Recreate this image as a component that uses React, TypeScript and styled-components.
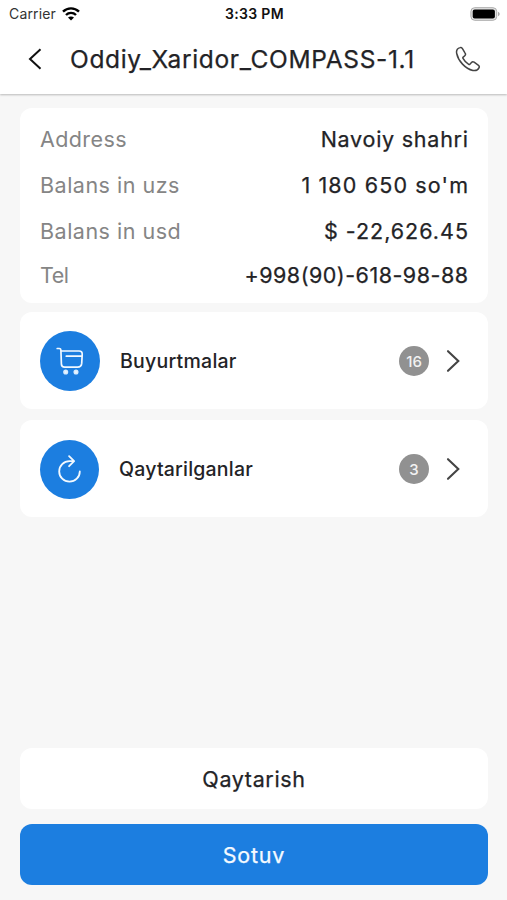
import React from 'react';
import styled, { createGlobalStyle } from 'styled-components';

const GlobalStyle = createGlobalStyle`
  * { box-sizing: border-box; }
  body { margin: 0; background: #f7f7f7; }
  button { font: inherit; border: 0; margin: 0; padding: 0; background: none; }
`;

const Screen = styled.div`
  display: flex;
  flex-direction: column;
  height: 900px;
  width: 507px;
  background: #f7f7f7;
  color: #232326;
  font-family: Inter, "Liberation Sans", sans-serif;
`;

const Top = styled.header`
  height: 94px;
  flex: none;
  background: #fff;
  box-shadow: 0 1px 2px rgba(0, 0, 0, 0.25);
`;

const StatusBar = styled.div`
  display: grid;
  grid-template-columns: 1fr auto 1fr;
  align-items: center;
  height: 27px;
  padding: 0 7px 0 9px;
  font-size: 14px;
  color: #111;
`;

const Carrier = styled.div`
  display: flex;
  align-items: center;
  gap: 6px;
  color: #333;
  letter-spacing: 0.15px;
`;

const Clock = styled.div`
  font-size: 14px;
  font-weight: 600;
  letter-spacing: 0.3px;
`;

const BatterySlot = styled.div`
  display: flex;
  justify-content: flex-end;
`;

const NavBar = styled.div`
  display: flex;
  align-items: center;
  height: 64px;
  padding: 0 26px 0 27px;
`;

const IconButton = styled.button`
  display: flex;
`;

const Title = styled.h1`
  flex: 1;
  margin: 0 0 0 27px;
  font-size: 24.5px;
  font-weight: 400;
  -webkit-text-stroke: 0.25px currentColor;
  line-height: 30px;
  letter-spacing: 0.65px;
  white-space: nowrap;
`;

const Content = styled.main`
  flex: 1;
  display: flex;
  flex-direction: column;
  padding: 14px 19px 15px 20px;
`;

const InfoCard = styled.dl`
  display: grid;
  grid-template-rows: 47px 46px 46px 42px;
  align-items: center;
  height: 195px;
  margin: 0 0 9px;
  padding: 7px 20px;
  border-radius: 12px;
  background: #fff;
`;

const InfoRow = styled.div`
  display: flex;
  justify-content: space-between;
  font-size: 21.5px;
  line-height: 28px;
`;

const Label = styled.dt<{ $spacing: number }>`
  color: #858585;
  letter-spacing: ${(p) => p.$spacing}px;
`;

const Value = styled.dd<{ $spacing: number }>`
  margin: 0 ${(p) => -p.$spacing}px 0 0;
  font-weight: 400;
  -webkit-text-stroke: 0.25px currentColor;
  letter-spacing: ${(p) => p.$spacing}px;
`;

const MenuCard = styled.button`
  display: flex;
  align-items: center;
  height: 97px;
  margin-bottom: 11px;
  padding: 1px 27px 0 20px;
  border-radius: 12px;
  background: #fff;
  color: inherit;
  text-align: left;
`;

const RoundIcon = styled.span<{ $size: number }>`
  display: flex;
  align-items: center;
  justify-content: center;
  width: ${(p) => p.$size}px;
  height: ${(p) => p.$size}px;
  margin-right: 20px;
  border-radius: 50%;
  background: #1c7ee0;
`;

const MenuLabel = styled.span<{ $spacing: number }>`
  flex: 1;
  font-size: 19.5px;
  font-weight: 500;
  letter-spacing: ${(p) => p.$spacing}px;
`;

const Count = styled.span`
  display: flex;
  align-items: center;
  justify-content: center;
  width: 30px;
  height: 30px;
  margin-right: 16px;
  border-radius: 50%;
  background: #919191;
  color: #f2f2f2;
  font-size: 15px;
  font-weight: 500;
`;

const Actions = styled.div`
  display: grid;
  gap: 15px;
  margin-top: auto;
`;

const ActionButton = styled.button<{ $primary?: boolean }>`
  height: 61px;
  border-radius: 12px;
  background: ${(p) => (p.$primary ? '#1c7ee0' : '#fff')};
  color: ${(p) => (p.$primary ? '#f4faff' : '#232326')};
  font-size: 21.5px;
  font-weight: 400;
  -webkit-text-stroke: 0.25px currentColor;
  letter-spacing: ${(p) => (p.$primary ? 0.8 : 0.65)}px;
`;

const WifiIcon = () => (
  <svg width="18" height="14" viewBox="0 0 18 14" fill="none" stroke="#000" strokeWidth="2.4">
    <path d="M1 4.7C5.5.3 12.5.3 17 4.7M4 8C6.8 5.2 11.2 5.2 14 8" />
    <path d="M9 13.5 6 10.6c1.6-1.6 4.4-1.6 6 0z" fill="#000" stroke="none" />
  </svg>
);

const BatteryIcon = () => (
  <svg width="30" height="14" viewBox="0 0 30 14">
    <rect x=".9" y=".7" width="25.8" height="12.6" rx="3.8" fill="#e4e4e4" stroke="#aaa" />
    <rect x="2.7" y="2.5" width="22.2" height="9" rx="2" fill="#000" />
    <path d="M28 4.8c2.2.9 2.2 3.5 0 4.4z" fill="#aaa" />
  </svg>
);

const BackIcon = () => (
  <svg width="16" height="22" viewBox="0 0 16 22" fill="none" stroke="#111" strokeWidth="2">
    <path d="M13.5 1.2 3 11l10.5 9.8" />
  </svg>
);

const PhoneIcon = () => (
  <svg width="26" height="26" viewBox="0 0 26 26" fill="none" stroke="#444" strokeWidth="1.5" strokeLinejoin="round">
    <path d="M5.1 1.6C2.6 2.3 1.1 4.6 1.7 7.5c1.5 7.4 8.6 15.3 16.2 16.9 3 .6 5.2-.6 6.2-2.8.4-.9.2-1.7-.6-2.3l-4.4-3.1c-.9-.6-1.9-.5-2.6.3l-1.5 1.6c-.4.4-.8.5-1.3.2-2.4-1.4-4.4-3.5-5.7-5.9-.3-.5-.2-.9.2-1.3l1.6-1.4c.8-.7.9-1.7.3-2.6L7.3 2.4c-.6-.8-1.3-1.1-2.2-.8z" />
  </svg>
);

const CartIcon = () => (
  <svg width="28" height="28" viewBox="0 0 28 28" fill="none" stroke="#f2f9ff" strokeWidth="1.7" strokeLinecap="round" strokeLinejoin="round">
    <path d="M1.2 1.5h2.1q1.5 0 1.6 1.6l.5 14q.2 3 3.2 3h13q3.8 0 4.1-3.7l.5-8.8Q26.5 4 23 4H5M10.3 9.2h15.3" />
    <circle cx="9.7" cy="25" r="1.7" fill="#f2f9ff" stroke="#d8ecff" />
    <circle cx="20" cy="25" r="1.7" fill="#f2f9ff" stroke="#d8ecff" />
  </svg>
);

const RefreshIcon = () => (
  <svg width="26" height="28" viewBox="0.5 0 26 28" fill="none" stroke="#f2f9ff" strokeWidth="1.8" strokeLinecap="round" strokeLinejoin="round">
    <path d="M23.3 16.4A10.3 10.3 0 1 1 13 6.1h4.5M12.6 1.2l5 5-5 5" />
  </svg>
);

const ChevronIcon = () => (
  <svg width="16" height="24" viewBox="0 0 16 24" fill="none" stroke="#444" strokeWidth="2.1" strokeLinecap="round">
    <path d="m3 2.2 10.3 9.8L3 21.8" />
  </svg>
);

const details = [
  { label: 'Address', value: 'Navoiy shahri', labelSpacing: 0.4, valueSpacing: 0.75 },
  { label: 'Balans in uzs', value: "1 180 650 so'm", labelSpacing: 0.5, valueSpacing: 1.15 },
  { label: 'Balans in usd', value: '$ -22,626.45', labelSpacing: 0.5, valueSpacing: 1 },
  { label: 'Tel', value: '+998(90)-618-98-88', labelSpacing: -0.5, valueSpacing: 0.5 },
];

const menu = [
  { label: 'Buyurtmalar', count: 16, size: 60, spacing: 0.25, icon: <CartIcon /> },
  { label: 'Qaytarilganlar', count: 3, size: 59, spacing: 0.2, icon: <RefreshIcon /> },
];

export default function App() {
  return (
    <>
      <GlobalStyle />
      <Screen>
        <Top>
          <StatusBar>
            <Carrier>
              <span>Carrier</span>
              <WifiIcon />
            </Carrier>
            <Clock>3:33 PM</Clock>
            <BatterySlot>
              <BatteryIcon />
            </BatterySlot>
          </StatusBar>
          <NavBar>
            <IconButton aria-label="Back">
              <BackIcon />
            </IconButton>
            <Title>Oddiy_Xaridor_COMPASS-1.1</Title>
            <IconButton aria-label="Call">
              <PhoneIcon />
            </IconButton>
          </NavBar>
        </Top>
        <Content>
          <InfoCard>
            {details.map((d) => (
              <InfoRow key={d.label}>
                <Label $spacing={d.labelSpacing}>{d.label}</Label>
                <Value $spacing={d.valueSpacing}>{d.value}</Value>
              </InfoRow>
            ))}
          </InfoCard>
          {menu.map((m) => (
            <MenuCard key={m.label}>
              <RoundIcon $size={m.size}>{m.icon}</RoundIcon>
              <MenuLabel $spacing={m.spacing}>{m.label}</MenuLabel>
              <Count>{m.count}</Count>
              <ChevronIcon />
            </MenuCard>
          ))}
          <Actions>
            <ActionButton>Qaytarish</ActionButton>
            <ActionButton $primary>Sotuv</ActionButton>
          </Actions>
        </Content>
      </Screen>
    </>
  );
}
